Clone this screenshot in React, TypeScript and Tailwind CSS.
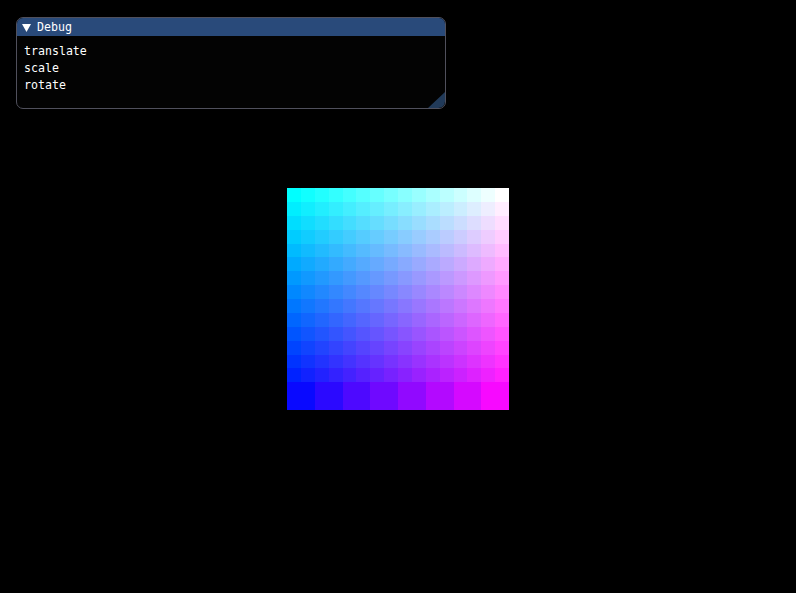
import React from "react";

function cellColor(c: number, r: number): string {
  const red = Math.round(c * 17);
  const green = Math.round((15 - r) * 17);
  return `rgb(${red},${green},255)`;
}

function ColorSquare() {
  const cells: React.ReactNode[] = [];
  for (let r = 0; r < 14; r++) {
    for (let c = 0; c < 16; c++) {
      cells.push(
        <div key={`${r}-${c}`} style={{ backgroundColor: cellColor(c, r) }} />
      );
    }
  }
  for (let k = 0; k < 8; k++) {
    const red = Math.round(17 * (2 * k + 0.5));
    const green = Math.round(8.5);
    cells.push(
      <div
        key={`b-${k}`}
        className="col-span-2 row-span-2"
        style={{ backgroundColor: `rgb(${red},${green},255)` }}
      />
    );
  }
  return (
    <div className="ml-[287px] mt-[79px] grid h-[222px] w-[222px] grid-cols-16 grid-rows-16">
      {cells}
    </div>
  );
}

function DebugWindow() {
  return (
    <div
      className="relative ml-[16px] h-[92px] w-[430px] overflow-hidden rounded-[7px] border border-[#50505c] bg-[#030303]"
      style={{ fontFamily: '"DejaVu Sans Mono", "Liberation Mono", monospace' }}
    >
      <div className="flex h-[18px] items-center bg-[#294a7a] pl-[5px] text-[11.6px] leading-[18px] text-white">
        <svg width="9" height="8" viewBox="0 0 9 8" className="mr-[6px] mt-[1px]">
          <polygon points="0,0 9,0 4.5,8" fill="#ffffff" />
        </svg>
        <span>Debug</span>
      </div>
      <div className="flex flex-col pl-[7px] pt-[7px] text-[11.6px] leading-[17px] text-white">
        <span>translate</span>
        <span>scale</span>
        <span>rotate</span>
      </div>
      <svg
        width="17"
        height="16"
        viewBox="0 0 17 16"
        className="absolute bottom-0 right-0"
      >
        <path d="M17,0 L17,9 Q17,16 10,16 L0,16 Z" fill="#213a59" />
      </svg>
    </div>
  );
}

export default function App() {
  return (
    <div className="h-[593px] w-[796px] overflow-hidden bg-black pt-[17px]">
      <DebugWindow />
      <ColorSquare />
    </div>
  );
}
